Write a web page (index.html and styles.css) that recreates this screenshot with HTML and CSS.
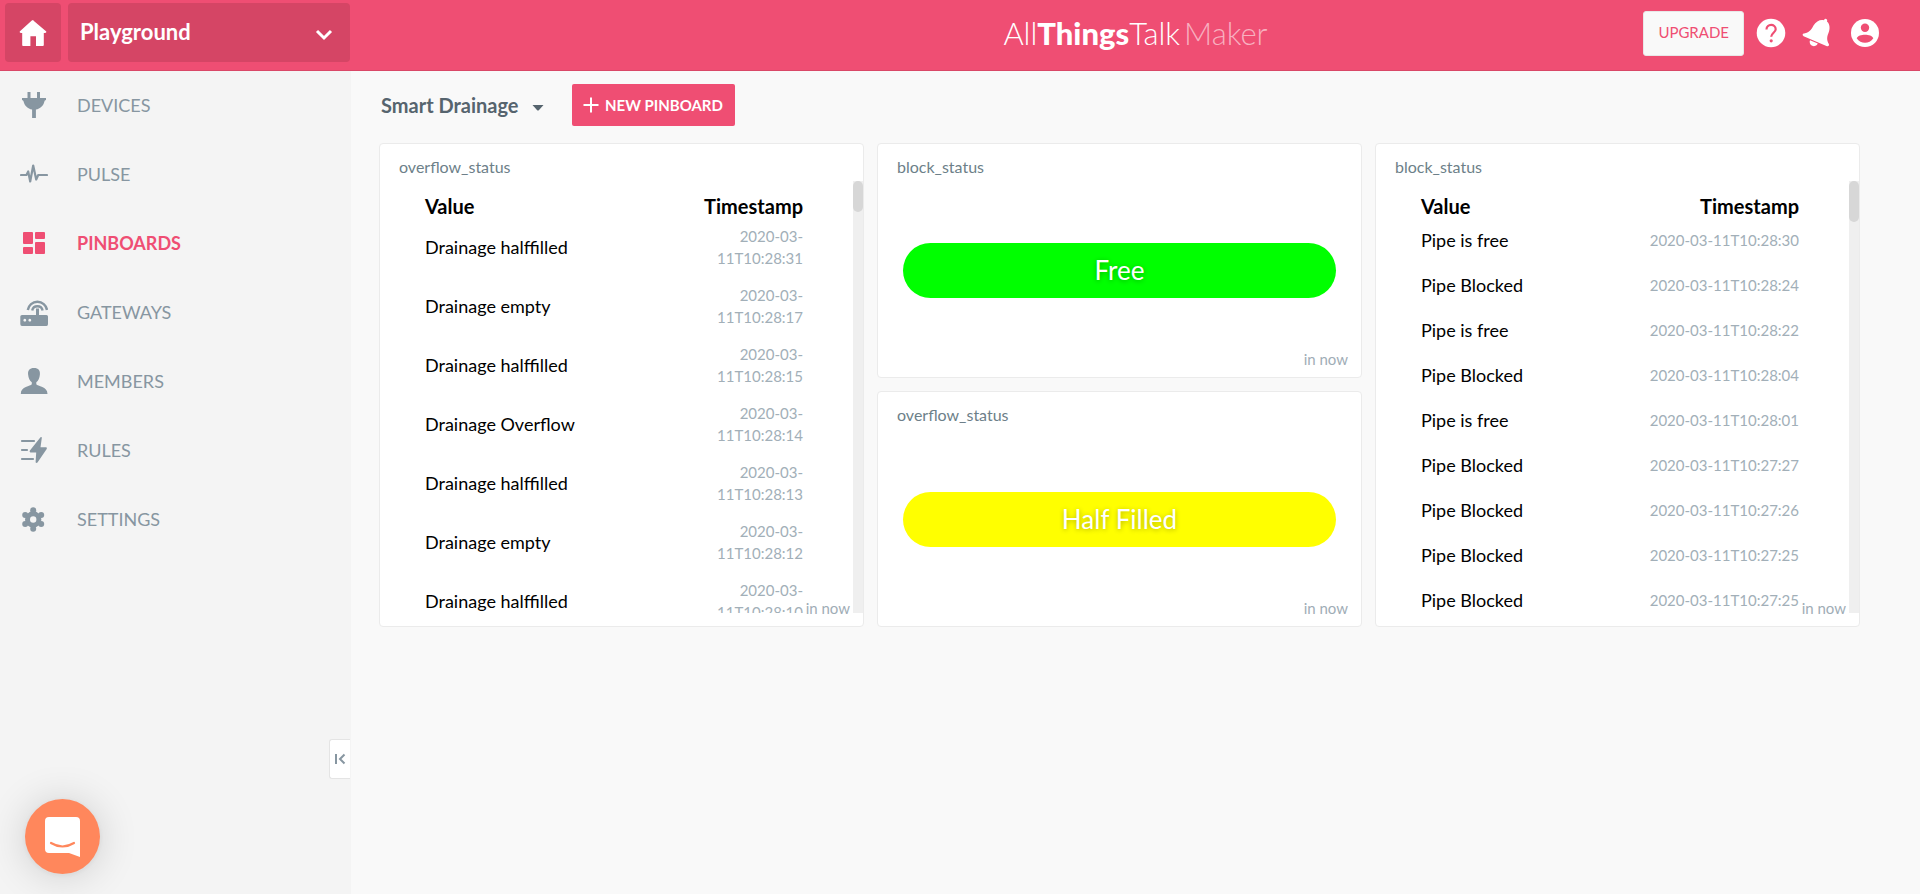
FILE: index.html
```html
<!DOCTYPE html>
<html lang="en">
<head>
<meta charset="utf-8">
<meta name="viewport" content="width=device-width, initial-scale=1">
<title>Smart Drainage - AllThingsTalk Maker</title>
<link rel="stylesheet" href="styles.css">
</head>
<body>
<header class="topbar">
  <div class="ground">
    <a class="home" href="#" aria-label="Home">
      <svg width="28" height="28" viewBox="0 0 28 28"><path d="M14 1.200L27.300 12.600Q27.700 14 26 14H24.800V26Q24.800 27 23.800 27H17V17.300H11.400V27H4Q3.200 27 3.200 26V14H2Q.3 14 .7 12.600L12.800 1.600Q14 .6 15.200 1.600Z" fill="#fff"/></svg>
    </a>
    <div class="ground-pick">
      <select class="ground-select" aria-label="Ground"><option>Playground</option></select>
      <svg class="chevron" width="18" height="12" viewBox="0 0 18 12"><path d="M2 2L9 9L16 2" fill="none" stroke="#fff" stroke-width="3"/></svg>
    </div>
  </div>
  <a class="logo" href="#">All<b>Things</b>Talk<span class="logo-product">Maker</span></a>
  <div class="actions">
    <button class="upgrade" type="button">UPGRADE</button>
    <button class="icon-button" type="button" aria-label="Help">
      <svg width="30" height="30" viewBox="0 0 30 30"><circle cx="15" cy="15" r="14.300" fill="#fff"/><path d="M10.500 11.500C10.500 5.500 19.700 5.500 19.700 11.200C19.700 14.500 15.200 15 15.200 18.800" fill="none" stroke="#ef4e73" stroke-width="2.200"/><circle cx="15.200" cy="22.800" r="1.600" fill="#ef4e73"/></svg>
    </button>
    <button class="icon-button" type="button" aria-label="Notifications">
      <svg width="34" height="30" viewBox="0 0 34 30"><g fill="#fff"><path d="M2 15.800C8 14.500 10 12.500 12.500 7.500C15 3 19.500 1.200 23 2.200Q23.800 .2 25.300 1Q26.800 1.700 26 3.600C29 6.300 29.300 10.800 27.300 15.500C25.500 20 26 22.500 28 26.300Q28.300 28.600 26 28.200L2.600 18.300Q.8 17 2 15.800Z"/><path d="M9 22.300L16.800 25.600A4.200 4.200 0 0 1 9 22.300Z"/></g></svg>
    </button>
    <button class="icon-button" type="button" aria-label="Account">
      <svg width="30" height="30" viewBox="0 0 30 30"><circle cx="15" cy="15" r="14" fill="#fff"/><circle cx="15" cy="9.700" r="4.200" fill="#ef4e73"/><path d="M6.700 20.300C8.500 15.700 21.500 15.700 23.300 20.300C19.500 26.300 10.500 26.300 6.700 20.300Z" fill="#ef4e73"/></svg>
    </button>
  </div>
</header>

<div class="layout">
  <nav class="sidebar" aria-label="Main">
    <a class="nav-item" href="#">
      <svg class="nav-icon" viewBox="0 0 28 28"><path d="M7.500 1H10.500V7H17V1H20V7H26V9Q24.500 9 24.400 10.500C23.500 14.800 20.200 17.800 15.900 18.500V27H12.100V18.500C7.800 17.800 4.500 14.800 3.600 10.500Q3.300 9 2 9V7H7.500Z" fill="currentColor"/></svg>
      <span>DEVICES</span></a>
    <a class="nav-item" href="#">
      <svg class="nav-icon" viewBox="0 0 28 28"><path d="M1 15H6.500L8.200 11.500L10.200 21.500L13.200 5.500L16.200 19.500L18.200 15H27" fill="none" stroke="currentColor" stroke-width="2.200" stroke-linejoin="round" stroke-linecap="round"/></svg>
      <span>PULSE</span></a>
    <a class="nav-item nav-item-active" href="#" aria-current="page">
      <svg class="nav-icon" viewBox="0 0 28 28"><g fill="currentColor"><rect x="3" y="3" width="10" height="12" rx="1"/><rect x="15" y="3" width="10" height="7" rx="1"/><rect x="3" y="18" width="10" height="7" rx="1"/><rect x="15" y="13" width="10" height="12" rx="1"/></g></svg>
      <span>PINBOARDS</span></a>
    <a class="nav-item" href="#">
      <svg class="nav-icon" viewBox="0 0 28 28"><path fill-rule="evenodd" d="M2 17H16V10.500H19V17H26.500Q28 17 28 18.500V26Q28 28 26.500 28H2Q.3 28 .3 26V18.500Q.3 17 2 17ZM4.800 20.800a1.400 1.400 0 1 0 .01 0ZM9.800 20.800a1.400 1.400 0 1 0 .01 0Z" fill="currentColor"/><g fill="none" stroke="currentColor" stroke-width="2.400"><path d="M7.800 12A9.700 9.700 0 0 1 27 12"/><path d="M12.200 12.500A5.300 5.300 0 0 1 22.600 12.500"/></g></svg>
      <span>GATEWAYS</span></a>
    <a class="nav-item" href="#">
      <svg class="nav-icon" viewBox="0 0 28 28"><path d="M14 1C18.500 1 20.300 3.500 19.900 7.500C19.600 11 18.300 14 16.300 15.200V17.300C17.500 19.600 27.500 19 27.500 27H.8C.8 19 10.600 19.600 11.800 17.300V15.200C9.800 14 8.400 11 8.100 7.500C7.700 3.500 9.500 1 14 1Z" fill="currentColor"/></svg>
      <span>MEMBERS</span></a>
    <a class="nav-item" href="#">
      <svg class="nav-icon" viewBox="0 0 28 28"><path d="M2 5H14M2 14H7M2 23H13" stroke="currentColor" stroke-width="2.200" stroke-linecap="round"/><path d="M20.500 1.200Q22 .5 21.800 2L20.500 11.300H26Q27.500 11.500 26.700 12.900L17.500 26.500Q16.200 27.600 15.600 26.200L16.200 16.500H10.500Q9 16 9.900 14.600Z" fill="currentColor"/></svg>
      <span>RULES</span></a>
    <a class="nav-item" href="#">
      <svg class="nav-icon" viewBox="0 0 28 28"><circle cx="13.200" cy="14.500" r="5.700" fill="none" stroke="currentColor" stroke-width="5"/><g fill="currentColor"><circle cx="13.200" cy="5.300" r="3"/><circle cx="13.200" cy="23.700" r="3"/><circle cx="21.200" cy="9.900" r="3"/><circle cx="21.200" cy="19.100" r="3"/><circle cx="5.200" cy="9.900" r="3"/><circle cx="5.200" cy="19.100" r="3"/></g></svg>
      <span>SETTINGS</span></a>
    <button class="collapse" type="button" aria-label="Collapse menu">
      <svg width="12" height="12" viewBox="0 0 12 12"><path d="M2 1V11M10.500 1.500L6 6L10.500 10.500" fill="none" stroke="currentColor" stroke-width="2"/></svg>
    </button>
  </nav>

  <main class="main">
    <div class="toolbar">
      <div class="board-pick">
        <select class="board-select" aria-label="Pinboard"><option>Smart Drainage</option></select>
        <svg class="caret" width="12" height="6" viewBox="0 0 12 6"><path d="M.5 0H11.500L6.800 5.200Q6 6 5.200 5.200Z" fill="#56646e"/></svg>
      </div>
      <button class="new-board" type="button">
        <svg width="16" height="16" viewBox="0 0 16 16"><path d="M8 .5V15.500M.5 8H15.500" stroke="#fff" stroke-width="2"/></svg>
        NEW PINBOARD</button>
    </div>

    <div class="board">
      <section class="card card-tall">
        <h2 class="card-title">overflow_status</h2>
        <div class="scroller">
          <div class="scroll-view">
            <table class="log log-narrow">
              <thead><tr><th class="log-value">Value</th><th class="log-time">Timestamp</th></tr></thead>
              <tbody>
                <tr><td class="log-value">Drainage halffilled</td><td class="log-time">2020-03-11T10:28:31</td></tr>
                <tr><td class="log-value">Drainage empty</td><td class="log-time">2020-03-11T10:28:17</td></tr>
                <tr><td class="log-value">Drainage halffilled</td><td class="log-time">2020-03-11T10:28:15</td></tr>
                <tr><td class="log-value">Drainage Overflow</td><td class="log-time">2020-03-11T10:28:14</td></tr>
                <tr><td class="log-value">Drainage halffilled</td><td class="log-time">2020-03-11T10:28:13</td></tr>
                <tr><td class="log-value">Drainage empty</td><td class="log-time">2020-03-11T10:28:12</td></tr>
                <tr><td class="log-value">Drainage halffilled</td><td class="log-time">2020-03-11T10:28:10</td></tr>
              </tbody>
            </table>
          </div>
          <div class="scroll-track"><div class="scroll-thumb thumb-short"></div></div>
        </div>
        <span class="age">in now</span>
      </section>

      <section class="card">
        <h2 class="card-title">block_status</h2>
        <div class="state"><div class="pill pill-free">Free</div></div>
        <span class="age">in now</span>
      </section>

      <section class="card card-tall">
        <h2 class="card-title">block_status</h2>
        <div class="scroller">
          <div class="scroll-view">
            <table class="log">
              <thead><tr><th class="log-value">Value</th><th class="log-time">Timestamp</th></tr></thead>
              <tbody>
                <tr><td class="log-value">Pipe is free</td><td class="log-time">2020-03-11T10:28:30</td></tr>
                <tr><td class="log-value">Pipe Blocked</td><td class="log-time">2020-03-11T10:28:24</td></tr>
                <tr><td class="log-value">Pipe is free</td><td class="log-time">2020-03-11T10:28:22</td></tr>
                <tr><td class="log-value">Pipe Blocked</td><td class="log-time">2020-03-11T10:28:04</td></tr>
                <tr><td class="log-value">Pipe is free</td><td class="log-time">2020-03-11T10:28:01</td></tr>
                <tr><td class="log-value">Pipe Blocked</td><td class="log-time">2020-03-11T10:27:27</td></tr>
                <tr><td class="log-value">Pipe Blocked</td><td class="log-time">2020-03-11T10:27:26</td></tr>
                <tr><td class="log-value">Pipe Blocked</td><td class="log-time">2020-03-11T10:27:25</td></tr>
                <tr><td class="log-value">Pipe Blocked</td><td class="log-time">2020-03-11T10:27:25</td></tr>
              </tbody>
            </table>
          </div>
          <div class="scroll-track"><div class="scroll-thumb thumb-long"></div></div>
        </div>
        <span class="age">in now</span>
      </section>

      <section class="card">
        <h2 class="card-title">overflow_status</h2>
        <div class="state"><div class="pill pill-half">Half Filled</div></div>
        <span class="age">in now</span>
      </section>
    </div>
  </main>
</div>

<button class="chat" type="button" aria-label="Open chat">
  <svg width="36" height="40" viewBox="0 0 36 40"><path d="M4 0H31Q35 0 35 4V40L24 36H4Q0 36 0 32V4Q0 0 4 0Z" fill="#fff"/><path d="M6 26Q17.500 33 29 26" fill="none" stroke="#ff875c" stroke-width="2.200" stroke-linecap="round"/></svg>
</button>
</body>
</html>
```
FILE: styles.css
```css
* {
  box-sizing: border-box;
}

body {
  margin: 0;
  min-height: 100vh;
  display: flex;
  flex-direction: column;
  background: #f9f9f9;
  color: #000;
  font-family: Lato, "Open Sans", sans-serif;
  font-size: 16px;
}

button,
select {
  font-family: inherit;
  cursor: pointer;
}

/* Top bar */
.topbar {
  display: grid;
  grid-template-columns: 351px 1fr;
  align-items: center;
  height: 71px;
  padding-bottom: 4px;
  background: #ef4e73;
  border-bottom: 1px solid #d94767;
}

.ground {
  align-self: start;
  display: flex;
  gap: 7px;
  padding: 3px 1px 0 5px;
  height: 62px;
}

.home {
  width: 56px;
  display: flex;
  align-items: center;
  justify-content: center;
  background: #d54565;
  border-radius: 4px;
}

.ground-pick {
  flex: 1;
  display: grid;
  align-items: center;
}

.ground-select {
  grid-area: 1 / 1;
  height: 100%;
  padding: 0 12px 2px;
  border: 0;
  border-radius: 4px;
  background: #d54565;
  color: #fff;
  font-size: 22px;
  font-weight: 700;
  appearance: none;
}

.chevron {
  grid-area: 1 / 1;
  justify-self: end;
  margin: 4px 17px 0 0;
  pointer-events: none;
}

.logo {
  grid-area: 1 / 2;
  justify-self: center;
  color: #fff;
  font-size: 31px;
  font-weight: 300;
  line-height: 40px;
  text-decoration: none;
}

.logo b {
  font-weight: 900;
}

.logo-product {
  padding-left: 4px;
  color: #f8b0c0;
}

.actions {
  grid-area: 1 / 2;
  justify-self: end;
  display: flex;
  align-items: center;
  gap: 12px;
  padding-right: 40px;
}

.upgrade {
  height: 45px;
  padding: 0 14px 2px;
  border: 1px solid #e8e8e8;
  border-radius: 3px;
  background: #f9f9f9;
  color: #ef4e73;
  font-size: 15px;
}

.icon-button {
  display: flex;
  padding: 0;
  border: 0;
  background: none;
}

.icon-button + .icon-button {
  margin-left: 3px;
}

/* Sidebar */
.layout {
  flex: 1;
  display: grid;
  grid-template-columns: 351px 1fr;
}

.sidebar {
  position: relative;
  background: #f4f4f4;
}

.nav-item {
  display: flex;
  align-items: center;
  gap: 29px;
  height: 69px;
  padding: 0 0 2px 20px;
  color: #8796a1;
  font-size: 18px;
  text-decoration: none;
}

.nav-item-active {
  color: #ef4e73;
  font-weight: 700;
}

.nav-icon {
  width: 28px;
  height: 28px;
}

.collapse {
  position: absolute;
  right: 1px;
  bottom: 115px;
  width: 21px;
  height: 40px;
  display: flex;
  align-items: center;
  justify-content: center;
  padding: 0;
  border: 1px solid #e4e4e4;
  border-right: 0;
  border-radius: 3px 0 0 3px;
  background: #fff;
  color: #8796a1;
}

/* Pinboard */
.main {
  padding: 13px 60px 40px 28px;
}

.toolbar {
  display: flex;
  align-items: center;
  gap: 28px;
  margin-bottom: 17px;
}

.board-pick {
  display: flex;
  align-items: center;
}

.board-select {
  margin-right: -12px;
  padding: 0 25px 0 2px;
  border: 0;
  background: none;
  color: #56646e;
  font-size: 20px;
  font-weight: 700;
  line-height: 24px;
  appearance: none;
}

.caret {
  margin-top: 6px;
  pointer-events: none;
}

.new-board {
  display: flex;
  align-items: center;
  gap: 6px;
  height: 42px;
  padding: 0 12px 1px 11px;
  border: 0;
  border-radius: 2px;
  background: #ef4e73;
  color: #fff;
  font-size: 15px;
  font-weight: 700;
}

.board {
  display: grid;
  grid-template-columns: repeat(3, 1fr);
  grid-template-rows: 235px 236px;
  gap: 13px;
}

.card {
  position: relative;
  display: flex;
  flex-direction: column;
  background: #fff;
  border: 1px solid #ebebeb;
  border-radius: 4px;
}

.card-tall {
  grid-row: span 2;
}

.card-title {
  margin: 0;
  padding: 13px 19px 4px;
  color: #6d7f89;
  font-size: 16px;
  font-weight: 400;
  line-height: 20px;
}

.age {
  position: absolute;
  right: 13px;
  bottom: 8px;
  color: #9fadb6;
  font-size: 15px;
  line-height: 20px;
}

.scroller {
  flex: 1;
  min-height: 0;
  display: flex;
  margin-bottom: 13px;
}

.scroll-view {
  flex: 1;
  overflow: hidden;
  padding: 13px 50px 0 45px;
}

.scroll-track {
  width: 10px;
  background: #efefef;
}

.scroll-thumb {
  border-radius: 5px;
  background: #d7d7d7;
}

.thumb-short {
  height: 31px;
}

.thumb-long {
  height: 41px;
}

.log {
  width: 100%;
  table-layout: fixed;
  border-collapse: collapse;
}

.log th {
  padding: 0;
  font-size: 20px;
  font-weight: 700;
  line-height: 25px;
}

.log td {
  padding: 6px 0 9px;
}

.log-value {
  text-align: left;
  font-size: 18px;
  line-height: 30px;
}

.log-time {
  text-align: right;
}

td.log-time {
  color: #a2afb8;
  font-size: 15px;
  line-height: 22px;
}

.log-narrow .log-value {
  width: 70%;
}

.state {
  flex: 1;
  display: flex;
  align-items: center;
  padding: 0 25px 17px;
}

.pill {
  flex: 1;
  border-radius: 28px;
  color: #fff;
  font-size: 26px;
  line-height: 55px;
  text-align: center;
  text-shadow: 0 1px 5px rgba(0, 0, 0, 0.3);
}

.pill-free {
  background: #0f0;
}

.pill-half {
  background: #ff0;
}

/* Chat launcher */
.chat {
  position: fixed;
  left: 25px;
  bottom: 20px;
  width: 75px;
  height: 75px;
  display: flex;
  align-items: center;
  justify-content: center;
  padding: 0;
  border: 0;
  border-radius: 50%;
  background: #ff875c;
  box-shadow: 0 1px 6px rgba(0, 0, 0, 0.06), 0 2px 40px rgba(0, 0, 0, 0.16);
}
```
